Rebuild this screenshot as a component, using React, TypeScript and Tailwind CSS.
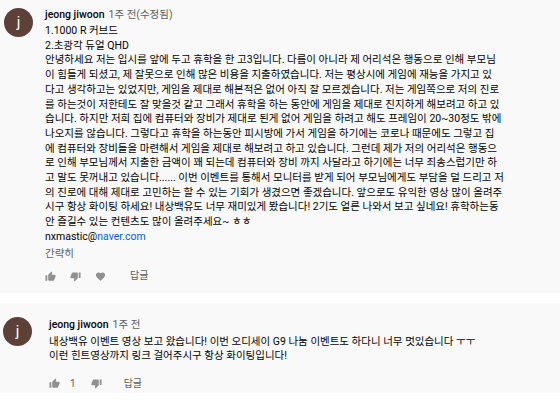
import { MdThumbUp, MdThumbDown, MdFavorite } from 'react-icons/md';

const FONT = { fontFamily: 'Roboto, "Noto Sans CJK KR", "Liberation Sans", sans-serif' };

const LINES_1 = [
  '안녕하세요 저는 입시를 앞에 두고 휴학을 한 고3입니다. 다름이 아니라 제 어리석은 행동으로 인해 부모님',
  '이 힘들게 되셨고, 제 잘못으로 인해 많은 비용을 지출하였습니다. 저는 평상시에 게임에 재능을 가지고 있',
  '다고 생각하고는 있었지만, 게임을 제대로 해본적은 없어 아직 잘 모르겠습니다. 저는 게임쪽으로 저의 진로',
  '를 하는것이 저한테도 잘 맞을것 같고 그래서 휴학을 하는 동안에 게임을 제대로 진지하게 해보려고 하고 있',
  '습니다. 하지만 저희 집에 컴퓨터와 장비가 제대로 된게 없어 게임을 하려고 해도 프레임이 20~30정도 밖에',
  '나오지를 않습니다. 그렇다고 휴학을 하는동안 피시방에 가서 게임을 하기에는 코로나 때문에도 그렇고 집',
  '에 컴퓨터와 장비들을 마련해서 게임을 제대로 해보려고 하고 있습니다. 그런데 제가 저의 어리석은 행동으',
  '로 인해 부모님께서 지출한 금액이 꽤 되는데 컴퓨터와 장비 까지 사달라고 하기에는 너무 죄송스럽기만 하',
  '고 말도 못꺼내고 있습니다...... 이번 이벤트를 통해서 모니터를 받게 되어 부모님에게도 부담을 덜 드리고 저',
  '의 진로에 대해 제대로 고민하는 할 수 있는 기회가 생겼으면 좋겠습니다. 앞으로도 유익한 영상 많이 올려주',
  '시구 항상 화이팅 하세요! 내상백유도 너무 재미있게 봤습니다! 2기도 얼른 나와서 보고 싶네요! 휴학하는동',
  '안 즐길수 있는 컨텐츠도 많이 올려주세요~ ㅎㅎ',
];

const LINES_2 = [
  '내상백유 이벤트 영상 보고 왔습니다! 이번 오디세이 G9 나눔 이벤트도 하다니 너무 멋있습니다 ㅜㅜ',
  '이런 힌트영상까지 링크 걸어주시구 항상 화이팅입니다!',
];

function Avatar() {
  return (
    <div className="w-[29px] h-[29px] rounded-full bg-[#5d4037] flex items-center justify-center text-white text-[15px] shrink-0">
      j
    </div>
  );
}

function Header({ time }: { time: string }) {
  return (
    <div className="flex items-center gap-[4px] h-[15px]">
      <span className="text-[10.5px] font-medium text-[#030303]">jeong jiwoon</span>
      <span className="text-[10.5px] text-[#606060]">{time}</span>
    </div>
  );
}

export default function App() {
  return (
    <div className="w-[560px] h-[400px] bg-white flex flex-col" style={FONT}>
      {/* first comment */}
      <div className="bg-[#f9f9f9] h-[293px] flex gap-[12px] pl-[4px] pt-[8px]">
        <Avatar />
        <div className="flex flex-col text-[10.5px] leading-[14.7px] text-[#030303]">
          <Header time="1주 전(수정됨)" />
          <div className="mt-[1px]">1.1000 R 커브드</div>
          <div>2.초광각 듀얼 QHD</div>
          {LINES_1.map((l, i) => (
            <div key={i} className="whitespace-nowrap">{l}</div>
          ))}
          <div>
            nxmastic@<span className="text-[#065fd4]">naver.com</span>
          </div>
          <div className="text-[#606060] mt-[2px]">간략히</div>
          <div className="flex items-center mt-[8px] text-[#909090]">
            <MdThumbUp className="w-[11px] h-[11px]" />
            <MdThumbDown className="w-[11px] h-[11px] ml-[14px]" />
            <MdFavorite className="w-[11px] h-[11px] ml-[14px]" />
            <span className="ml-[24px] text-[10px] text-[#606060]">답글</span>
          </div>
        </div>
      </div>

      <div className="h-[10px]" />

      {/* second comment */}
      <div className="bg-[#f9f9f9] h-[90px] flex gap-[17px] pl-[3px] pt-[14px]">
        <Avatar />
        <div className="flex flex-col text-[10.5px] leading-[15px] text-[#030303]">
          <Header time="1주 전" />
          <div className="mt-[3px]" />
          {LINES_2.map((l, i) => (
            <div key={i} className="whitespace-nowrap leading-[14px]">{l}</div>
          ))}
          <div className="flex items-center mt-[13px] text-[#909090]">
            <MdThumbUp className="w-[11px] h-[11px]" />
            <span className="ml-[10px] text-[10px] text-[#606060]">1</span>
            <MdThumbDown className="w-[11px] h-[11px] ml-[15px]" />
            <span className="ml-[22px] text-[10px] text-[#606060]">답글</span>
          </div>
        </div>
      </div>
    </div>
  );
}
